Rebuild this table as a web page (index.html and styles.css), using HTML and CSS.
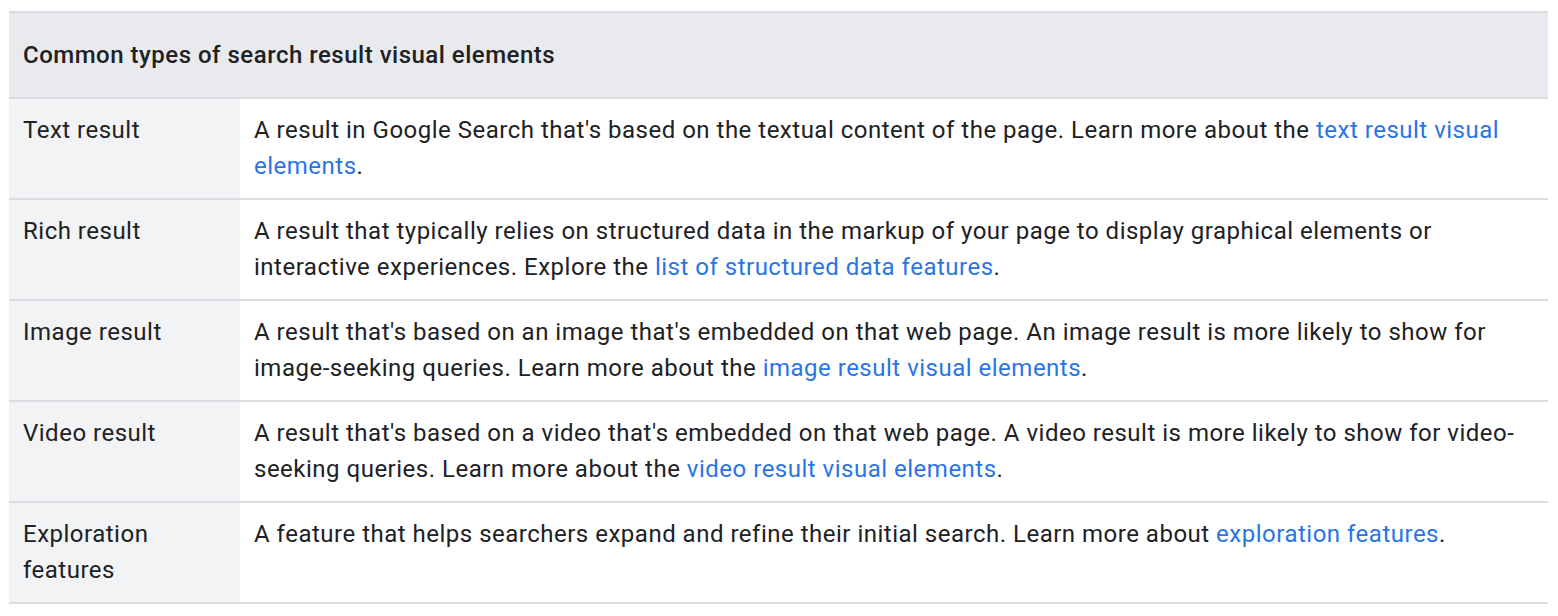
FILE: index.html
```html
<!DOCTYPE html>
<html lang="en">
<head>
<meta charset="utf-8">
<title>Common types of search result visual elements</title>
<link rel="stylesheet" href="styles.css">
</head>
<body>
<table class="types">
  <thead>
    <tr><th colspan="2" class="head">Common types of search result visual elements</th></tr>
  </thead>
  <tbody>
    <tr>
      <td class="label">Text result</td>
      <td class="desc">A result in Google Search that's based on the textual content of the page. Learn more about the <a href="#">text result visual elements</a>.</td>
    </tr>
    <tr>
      <td class="label">Rich result</td>
      <td class="desc">A result that typically relies on structured data in the markup of your page to display graphical elements or interactive experiences. Explore the <a href="#">list of structured data features</a>.</td>
    </tr>
    <tr>
      <td class="label">Image result</td>
      <td class="desc">A result that's based on an image that's embedded on that web page. An image result is more likely to show for image-seeking queries. Learn more about the <a href="#">image result visual elements</a>.</td>
    </tr>
    <tr>
      <td class="label">Video result</td>
      <td class="desc">A result that's based on a video that's embedded on that web page. A video result is more likely to show for video-seeking queries. Learn more about the <a href="#">video result visual elements</a>.</td>
    </tr>
    <tr>
      <td class="label">Exploration features</td>
      <td class="desc">A feature that helps searchers expand and refine their initial search. Learn more about <a href="#">exploration features</a>.</td>
    </tr>
  </tbody>
</table>
</body>
</html>
```
FILE: styles.css
```css
html, body {
  margin: 0;
  padding: 0;
  background: #ffffff;
}
body {
  padding: 11px 10px 0 9px;
  font-family: Roboto, "Liberation Sans", Arial, sans-serif;
  color: #202124;
  font-size: 24px;
  line-height: 36px;
  letter-spacing: 0.5px;
}
.types {
  width: 1539px;
  border-collapse: collapse;
  border-top: 2px solid #dadce0;
}
.head {
  background: #e8eaed;
  text-align: left;
  font-weight: 500;
  padding: 24px 14px;
  border-bottom: 2px solid #dadce0;
}
.types td {
  vertical-align: top;
  padding: 13px 14px 14px;
  border-bottom: 2px solid #dadce0;
}
.label {
  width: 203px;
  background: #f1f3f4;
}
.desc {
  background: #ffffff;
}
.desc a {
  color: #2a74e6;
  text-decoration: none;
}
```
